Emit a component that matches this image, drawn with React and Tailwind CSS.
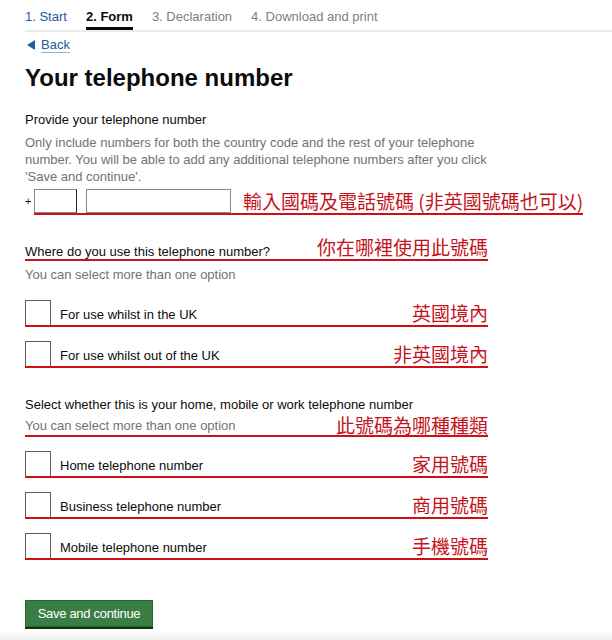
const TABS = [
  { label: '1. Start', state: 'done' },
  { label: '2. Form', state: 'active' },
  { label: '3. Declaration', state: 'todo' },
  { label: '4. Download and print', state: 'todo' },
];

const tabColors = {
  done: 'text-[#245aa0]',
  active: 'text-[#0b0c0c] font-bold border-b-[3px] border-[#0b0c0c]',
  todo: 'text-[#7b7f82] border-b-[3px] border-transparent',
};

const cjk = { fontFamily: '"Noto Sans CJK TC", "Noto Sans CJK SC", sans-serif' };

const Note = ({ children, className = '' }) => (
  <span className={`text-[19px] text-[#c3141d] whitespace-nowrap ${className}`} style={cjk}>
    {children}
  </span>
);

const CheckRow = ({ label, note, className = '' }) => (
  <div className={`w-[463px] h-[27px] flex items-center border-b-2 border-[#cc1016] ${className}`}>
    <div className="w-[26px] h-[25px] border border-b-0 border-[#5c5c5c] shrink-0" />
    <span className="ml-[9px] pt-[3px] text-[13px] leading-[17px] text-[#0b0c0c]">{label}</span>
    <Note className="ml-auto leading-[24px] pt-[1px]">{note}</Note>
  </div>
);

export default function App() {
  return (
    <div
      className="w-[612px] h-[640px] overflow-hidden bg-white flex flex-col"
      style={{ fontFamily: '"Liberation Sans", Arial, sans-serif' }}
    >
      <div className="pl-[25px]">
        {/* step tabs */}
        <div className="flex gap-[19px] pt-[8px] border-b-2 border-[#e9eaea]">
          {TABS.map((tab) => (
            <div
              key={tab.label}
              className={`text-[13px] leading-[17px] pb-[2px] ${tabColors[tab.state]}`}
            >
              {tab.label}
            </div>
          ))}
        </div>

        <a href="#" className="mt-[4px] flex items-center h-[17px] text-[13px] text-[#245aa0]">
          <svg width="8" height="10" viewBox="0 0 8 10" className="ml-[2px]">
            <path d="M8 0 L0 5 L8 10 Z" fill="#245aa0" />
          </svg>
          <span className="ml-[6px] underline decoration-[#9ab0cf] underline-offset-[3px]">Back</span>
        </a>

        <h1 className="mt-[10px] text-[24px] leading-[30px] font-bold text-[#0b0c0c]">
          Your telephone number
        </h1>

        <p className="mt-[18px] text-[13px] leading-[17px] text-[#0b0c0c]">Provide your telephone number</p>
        <p className="mt-[6px] text-[13px] leading-[17px] text-[#6f7376]">
          Only include numbers for both the country code and the rest of your telephone
          <br />
          number. You will be able to add any additional telephone numbers after you click
          <br />
          'Save and continue'.
        </p>

        <div className="mt-[4px] flex items-start">
          <span className="w-[9px] h-[24px] flex items-center text-[11px] text-[#0b0c0c]">+</span>
          <div className="flex items-center border-b-2 border-[#cc1016]">
            <div className="w-[43px] h-[24px] border border-[#8a8a8a] border-r-[#222]" />
            <div className="ml-[9px] w-[145px] h-[24px] border border-[#8a8a8a]" />
            <Note className="ml-[12px] leading-[24px]">輸入國碼及電話號碼 (非英國號碼也可以)</Note>
          </div>
        </div>

        <div className="mt-[20px] w-[463px] flex items-end justify-between border-b-2 border-[#cc1016]">
          <span className="text-[13px] leading-[13px] text-[#0b0c0c] pb-[1px]">
            Where do you use this telephone number?
          </span>
          <Note className="leading-[24px]">你在哪裡使用此號碼</Note>
        </div>
        <p className="mt-[5px] text-[13px] leading-[17px] text-[#6f7376]">You can select more than one option</p>

        <CheckRow className="mt-[17px]" label="For use whilst in the UK" note="英國境內" />
        <CheckRow className="mt-[14px]" label="For use whilst out of the UK" note="非英國境內" />

        <p className="mt-[28px] text-[13px] leading-[17px] text-[#0b0c0c]">
          Select whether this is your home, mobile or work telephone number
        </p>
        <div className="mt-[2px] w-[463px] flex items-end justify-between border-b-2 border-[#cc1016]">
          <span className="text-[13px] leading-[13px] text-[#6f7376] pb-[3px]">
            You can select more than one option
          </span>
          <Note className="leading-[20px]">此號碼為哪種種類</Note>
        </div>

        <CheckRow className="mt-[14px]" label="Home telephone number" note="家用號碼" />
        <CheckRow className="mt-[14px]" label="Business telephone number" note="商用號碼" />
        <CheckRow className="mt-[14px]" label="Mobile telephone number" note="手機號碼" />

        <button className="mt-[40px] w-[128px] h-[27px] bg-[#3a7d45] border border-[#1f6d28] shadow-[0_2px_0_#0f3318] text-white text-[13px] tracking-[-0.3px] leading-[25px]">
          Save and continue
        </button>
      </div>
      <div className="mt-auto h-[10px] bg-gradient-to-b from-white to-[#ededed]" />
    </div>
  );
}
